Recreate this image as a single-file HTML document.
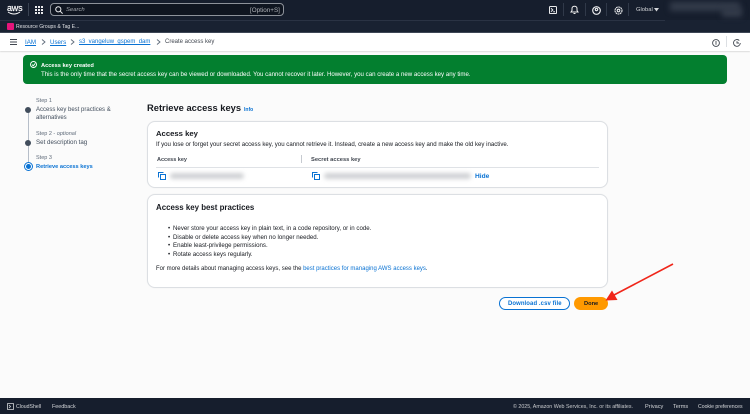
<!DOCTYPE html>
<html><head><meta charset="utf-8">
<style>
*{box-sizing:border-box;margin:0;padding:0}
html,body{width:750px;height:414px;overflow:hidden;background:#fbfbfb}
body{font-family:"Liberation Sans",sans-serif;color:#16191f;position:relative}
#r{position:absolute;left:0;top:0;width:750px;height:414px;filter:blur(.33px)}
.a{position:absolute;white-space:nowrap}
.l{color:#0972d3}
.card{position:absolute;background:#fff;border:1px solid #dcdfe3;border-radius:8px;box-shadow:0 0 1px rgba(0,0,0,.08)}
.blurbar{position:absolute;background:#cfd1d4;filter:blur(2px);border-radius:3px}
svg{position:absolute;overflow:visible}
</style></head><body><div id="r">
<!-- top nav -->
<div class="a" style="left:0;top:0;width:750px;height:20px;background:#161e2d"></div>
<div class="a" style="left:0;top:20px;width:750px;height:13px;background:#192232"></div>
<div class="a" style="left:0;top:20px;width:665px;height:1px;background:#2a3344"></div>
<div class="a" style="left:0;top:32px;width:750px;height:1px;background:#3d4655"></div>
<div class="a" style="left:7px;top:2.500px;font-size:9px;color:#fff;letter-spacing:-.2px;-webkit-text-stroke:.2px #fff">aws</div>
<svg style="left:7px;top:10.500px" width="15" height="5"><path d="M1 1Q7 5 13 1" fill="none" stroke="#fff" stroke-width="1"/></svg>
<div class="a" style="left:28px;top:3px;width:1px;height:13px;background:#3a4352"></div>
<svg style="left:35px;top:6px" width="8" height="8" fill="#e8e9eb"><rect width="2" height="2"/><rect x="3" width="2" height="2"/><rect x="6" width="2" height="2"/><rect y="3" width="2" height="2"/><rect x="3" y="3" width="2" height="2"/><rect x="6" y="3" width="2" height="2"/><rect y="6" width="2" height="2"/><rect x="3" y="6" width="2" height="2"/><rect x="6" y="6" width="2" height="2"/></svg>
<div class="a" style="left:50px;top:3px;width:234px;height:13px;background:#0f1520;border:1px solid #8d929a;border-radius:4px"></div>
<svg style="left:55px;top:6px" width="8" height="8" fill="none" stroke="#e8e9eb" stroke-width="1"><circle cx="3.300" cy="3.300" r="2.600"/><path d="M5.200 5.200L7.600 7.600"/></svg>
<div class="a" style="left:66px;top:5.500px;font-size:5.900px;font-style:italic;color:#a5a9af;line-height:9px">Search</div>
<div class="a" style="left:250px;top:5.500px;font-size:6.300px;color:#b0b3b8;line-height:9px">[Option+S]</div>
<svg style="left:549px;top:6px" width="8" height="8" fill="none" stroke="#e8e9eb" stroke-width="1"><rect x=".5" y=".5" width="7" height="7" rx=".8"/><path d="M2 2.300L3.800 4 2 5.700M4.200 5.800H6"/></svg>
<div class="a" style="left:563px;top:3px;width:1px;height:13px;background:#303949"></div>
<svg style="left:570px;top:5px" width="9" height="10" fill="none" stroke="#f0f0f0" stroke-width="1"><path d="M1 7H8L7 5.500V3.500C7 .5 2 .5 2 3.500V5.500Z"/><path d="M3.500 8.500H5.500"/></svg>
<div class="a" style="left:585px;top:3px;width:1px;height:13px;background:#303949"></div>
<svg style="left:592px;top:5.500px" width="9" height="9" fill="none" stroke="#e8e9eb" stroke-width="1.200"><circle cx="4.500" cy="4.500" r="3.800"/><circle cx="4.500" cy="3.500" r="1.200"/></svg>
<div class="a" style="left:606px;top:3px;width:1px;height:13px;background:#303949"></div>
<svg style="left:614px;top:5.500px" width="9" height="9" fill="none" stroke="#e8e9eb" stroke-width="1.100"><circle cx="4.500" cy="4.500" r="3.500" stroke-dasharray="1.800 .5"/><circle cx="4.500" cy="4.500" r="1.300"/></svg>
<div class="a" style="left:628px;top:3px;width:1px;height:13px;background:#303949"></div>
<div class="a" style="left:636px;top:5.500px;font-size:5.800px;color:#d5d7da;line-height:9px">Global</div>
<svg style="left:654px;top:8px" width="5" height="4"><path d="M0 0H5L2.500 3.500Z" fill="#d5d7da"/></svg>
<div class="a" style="left:670px;top:2px;width:70px;height:9px;background:#333b4a;filter:blur(3px)"></div>
<div class="a" style="left:722px;top:8px;width:20px;height:9px;background:#333b4a;filter:blur(3px)"></div>
<div class="a" style="left:7px;top:23px;width:7px;height:7px;background:#e7157b;border-radius:1px"></div>
<div class="a" style="left:16px;top:22.500px;font-size:5.100px;color:#dfe0e3;line-height:9px">Resource Groups &amp; Tag E...</div>
<!-- breadcrumb -->
<div class="a" style="left:0;top:33px;width:750px;height:18px;background:#fff;box-shadow:0 1px 1px rgba(0,0,0,.12)"></div>
<svg style="left:10px;top:39px" width="7" height="6" stroke="#414750" stroke-width="1"><path d="M0 .5H7M0 3H7M0 5.500H7"/></svg>
<div class="a l" style="left:25px;top:38px;font-size:6.200px;line-height:9px;text-decoration:underline">IAM</div>
<svg style="left:41px;top:39px" width="5" height="6" fill="none" stroke="#5f6b7a" stroke-width=".9"><path d="M1 .5L4 3 1 5.500"/></svg>
<div class="a l" style="left:50px;top:38px;font-size:6.200px;line-height:9px;text-decoration:underline">Users</div>
<svg style="left:70px;top:39px" width="5" height="6" fill="none" stroke="#5f6b7a" stroke-width=".9"><path d="M1 .5L4 3 1 5.500"/></svg>
<div class="a l" style="left:79px;top:38px;font-size:6px;line-height:9px;text-decoration:underline">s3_vangeluw_gspem_dam</div>
<svg style="left:156px;top:39px" width="5" height="6" fill="none" stroke="#5f6b7a" stroke-width=".9"><path d="M1 .5L4 3 1 5.500"/></svg>
<div class="a" style="left:165px;top:38px;font-size:6px;line-height:9px;color:#414750">Create access key</div>
<svg style="left:712px;top:38.500px" width="8" height="8" fill="none" stroke="#414750" stroke-width=".9"><circle cx="4" cy="4" r="3.400"/><path d="M4 2V5.800"/></svg>
<div class="a" style="left:726px;top:36px;width:1px;height:11px;background:#dcdfe3"></div>
<svg style="left:733px;top:38.500px" width="8" height="8" fill="none" stroke="#414750" stroke-width=".9"><path d="M7.300 4A3.400 3.400 0 1 1 6.300 1.500"/><path d="M4 2.200V4H6"/></svg>
<!-- flash -->
<div class="a" style="left:23px;top:55px;width:704px;height:29px;background:#037f2f;border-radius:4px"></div>
<svg style="left:30px;top:61px" width="7" height="7" fill="none" stroke="#fff" stroke-width=".9"><circle cx="3.500" cy="3.500" r="3"/><path d="M2 3.600L3.200 4.800 5.200 2.400"/></svg>
<div class="a" style="left:41px;top:61.500px;font-size:5.700px;font-weight:bold;color:#fff;line-height:9px">Access key created</div>
<div class="a" style="left:41px;top:69.500px;font-size:6.120px;color:#fff;line-height:9px">This is the only time that the secret access key can be viewed or downloaded. You cannot recover it later. However, you can create a new access key any time.</div>
<!-- steps -->
<div class="a" style="left:27.500px;top:112px;width:1px;height:52px;background:#b6bec9"></div>
<div class="a" style="left:25px;top:106.500px;width:6px;height:6px;border-radius:50%;background:#414d5c"></div>
<div class="a" style="left:25px;top:139.500px;width:6px;height:6px;border-radius:50%;background:#414d5c"></div>
<div class="a" style="left:23.500px;top:162px;width:9px;height:9px;border-radius:50%;border:1px solid #0972d3;background:#fff"></div>
<div class="a" style="left:25.500px;top:164px;width:5px;height:5px;border-radius:50%;background:#0972d3"></div>
<div class="a" style="left:36px;top:96.500px;font-size:5.500px;color:#5f6b7a;line-height:9px">Step 1</div>
<div class="a" style="left:36px;top:105.500px;font-size:6px;color:#414d5c;line-height:9px">Access key best practices &amp;</div>
<div class="a" style="left:36px;top:114px;font-size:6px;color:#414d5c;line-height:9px">alternatives</div>
<div class="a" style="left:36px;top:129.500px;font-size:5.500px;color:#5f6b7a;line-height:9px">Step 2 - <i>optional</i></div>
<div class="a" style="left:36px;top:138px;font-size:6.200px;color:#414d5c;line-height:9px">Set description tag</div>
<div class="a" style="left:36px;top:153.500px;font-size:5.500px;color:#5f6b7a;line-height:9px">Step 3</div>
<div class="a l" style="left:36px;top:163px;font-size:5.650px;font-weight:bold;line-height:9px">Retrieve access keys</div>
<!-- heading -->
<div class="a" style="left:147px;top:101px;font-size:9.350px;font-weight:bold;line-height:14px">Retrieve access keys</div>
<div class="a l" style="left:244px;top:105.500px;font-size:5px;font-weight:bold;line-height:9px">Info</div>
<!-- card 1 -->
<div class="card" style="left:147px;top:121px;width:461px;height:67px"></div>
<div class="a" style="left:156px;top:127.500px;font-size:7.700px;font-weight:bold;line-height:12px">Access key</div>
<div class="a" style="left:156px;top:140px;font-size:6.100px;line-height:9px;color:#16191f">If you lose or forget your secret access key, you cannot retrieve it. Instead, create a new access key and make the old key inactive.</div>
<div class="a" style="left:157px;top:155.500px;font-size:5.500px;font-weight:bold;color:#414750;line-height:9px">Access key</div>
<div class="a" style="left:301px;top:155px;width:1px;height:8px;background:#c6cad0"></div>
<div class="a" style="left:311px;top:155.500px;font-size:5.750px;font-weight:bold;color:#414750;line-height:9px">Secret access key</div>
<div class="a" style="left:156px;top:167px;width:443px;height:1px;background:#dfe2e6"></div>
<svg style="left:158px;top:172px" width="8" height="8" fill="none" stroke="#0972d3" stroke-width="1"><path d="M5.500.5H.5V5.500"/><rect x="2.500" y="2.500" width="5" height="5"/></svg>
<div class="blurbar" style="left:170px;top:173px;width:74px;height:6px"></div>
<svg style="left:312px;top:172px" width="8" height="8" fill="none" stroke="#0972d3" stroke-width="1"><path d="M5.500.5H.5V5.500"/><rect x="2.500" y="2.500" width="5" height="5"/></svg>
<div class="blurbar" style="left:324px;top:173px;width:147px;height:6px"></div>
<div class="a l" style="left:475px;top:172px;font-size:6.600px;font-weight:bold;line-height:9px">Hide</div>
<!-- card 2 -->
<div class="card" style="left:147px;top:194px;width:461px;height:94px"></div>
<div class="a" style="left:156px;top:201.500px;font-size:7.900px;font-weight:bold;line-height:12px">Access key best practices</div>
<div class="a" style="left:168px;top:224px;font-size:6.100px;line-height:9px">•</div>
<div class="a" style="left:173px;top:224px;font-size:6.130px;line-height:9px">Never store your access key in plain text, in a code repository, or in code.</div>
<div class="a" style="left:168px;top:232.700px;font-size:6.100px;line-height:9px">•</div>
<div class="a" style="left:173px;top:232.700px;font-size:6.130px;line-height:9px">Disable or delete access key when no longer needed.</div>
<div class="a" style="left:168px;top:241.400px;font-size:6.100px;line-height:9px">•</div>
<div class="a" style="left:173px;top:241.400px;font-size:6.130px;line-height:9px">Enable least-privilege permissions.</div>
<div class="a" style="left:168px;top:250px;font-size:6.100px;line-height:9px">•</div>
<div class="a" style="left:173px;top:250px;font-size:6.130px;line-height:9px">Rotate access keys regularly.</div>
<div class="a" style="left:156px;top:265px;font-size:6px;line-height:9px">For more details about managing access keys, see the <span class="l">best practices for managing AWS access keys</span>.</div>
<!-- buttons -->
<div class="a" style="left:499px;top:297px;width:71px;height:13px;border:1px solid #0972d3;border-radius:7px;background:#fff"></div>
<div class="a l" style="left:508px;top:299.500px;font-size:5.950px;font-weight:bold;line-height:9px;letter-spacing:.1px">Download .csv file</div>
<div class="a" style="left:574px;top:297px;width:34px;height:13px;border-radius:7px;background:#ff9900"></div>
<div class="a" style="left:584px;top:299.500px;font-size:5.700px;font-weight:bold;line-height:9px;color:#16191f">Done</div>
<!-- arrow -->
<svg style="left:0;top:0" width="750" height="414"><path d="M673 264L614 295" stroke="#f0261a" stroke-width="1.600" fill="none"/><path d="M605.500 300.500L612 290.500 617.500 300Z" fill="#f0261a"/></svg>
<!-- footer -->
<div class="a" style="left:0;top:398px;width:750px;height:16px;background:#161e2d"></div>
<svg style="left:7px;top:402.500px" width="7" height="7" fill="none" stroke="#d5d7da" stroke-width=".8"><rect x=".4" y=".4" width="6.200" height="6.200" rx=".6"/><path d="M2 2L3.500 3.500 2 5"/></svg>
<div class="a" style="left:16px;top:402.500px;font-size:5.200px;color:#d5d7da;line-height:9px">CloudShell</div>
<div class="a" style="left:52px;top:402.500px;font-size:5.400px;color:#d5d7da;line-height:9px">Feedback</div>
<div class="a" style="left:513px;top:402.500px;font-size:5.300px;color:#c8cacd;line-height:9px">© 2025, Amazon Web Services, Inc. or its affiliates.</div>
<div class="a" style="left:645px;top:402.500px;font-size:5.600px;color:#d5d7da;line-height:9px">Privacy</div>
<div class="a" style="left:673px;top:402.500px;font-size:5.600px;color:#d5d7da;line-height:9px">Terms</div>
<div class="a" style="left:698px;top:402.500px;font-size:5.150px;color:#d5d7da;line-height:9px">Cookie preferences</div>
</div></body></html>
